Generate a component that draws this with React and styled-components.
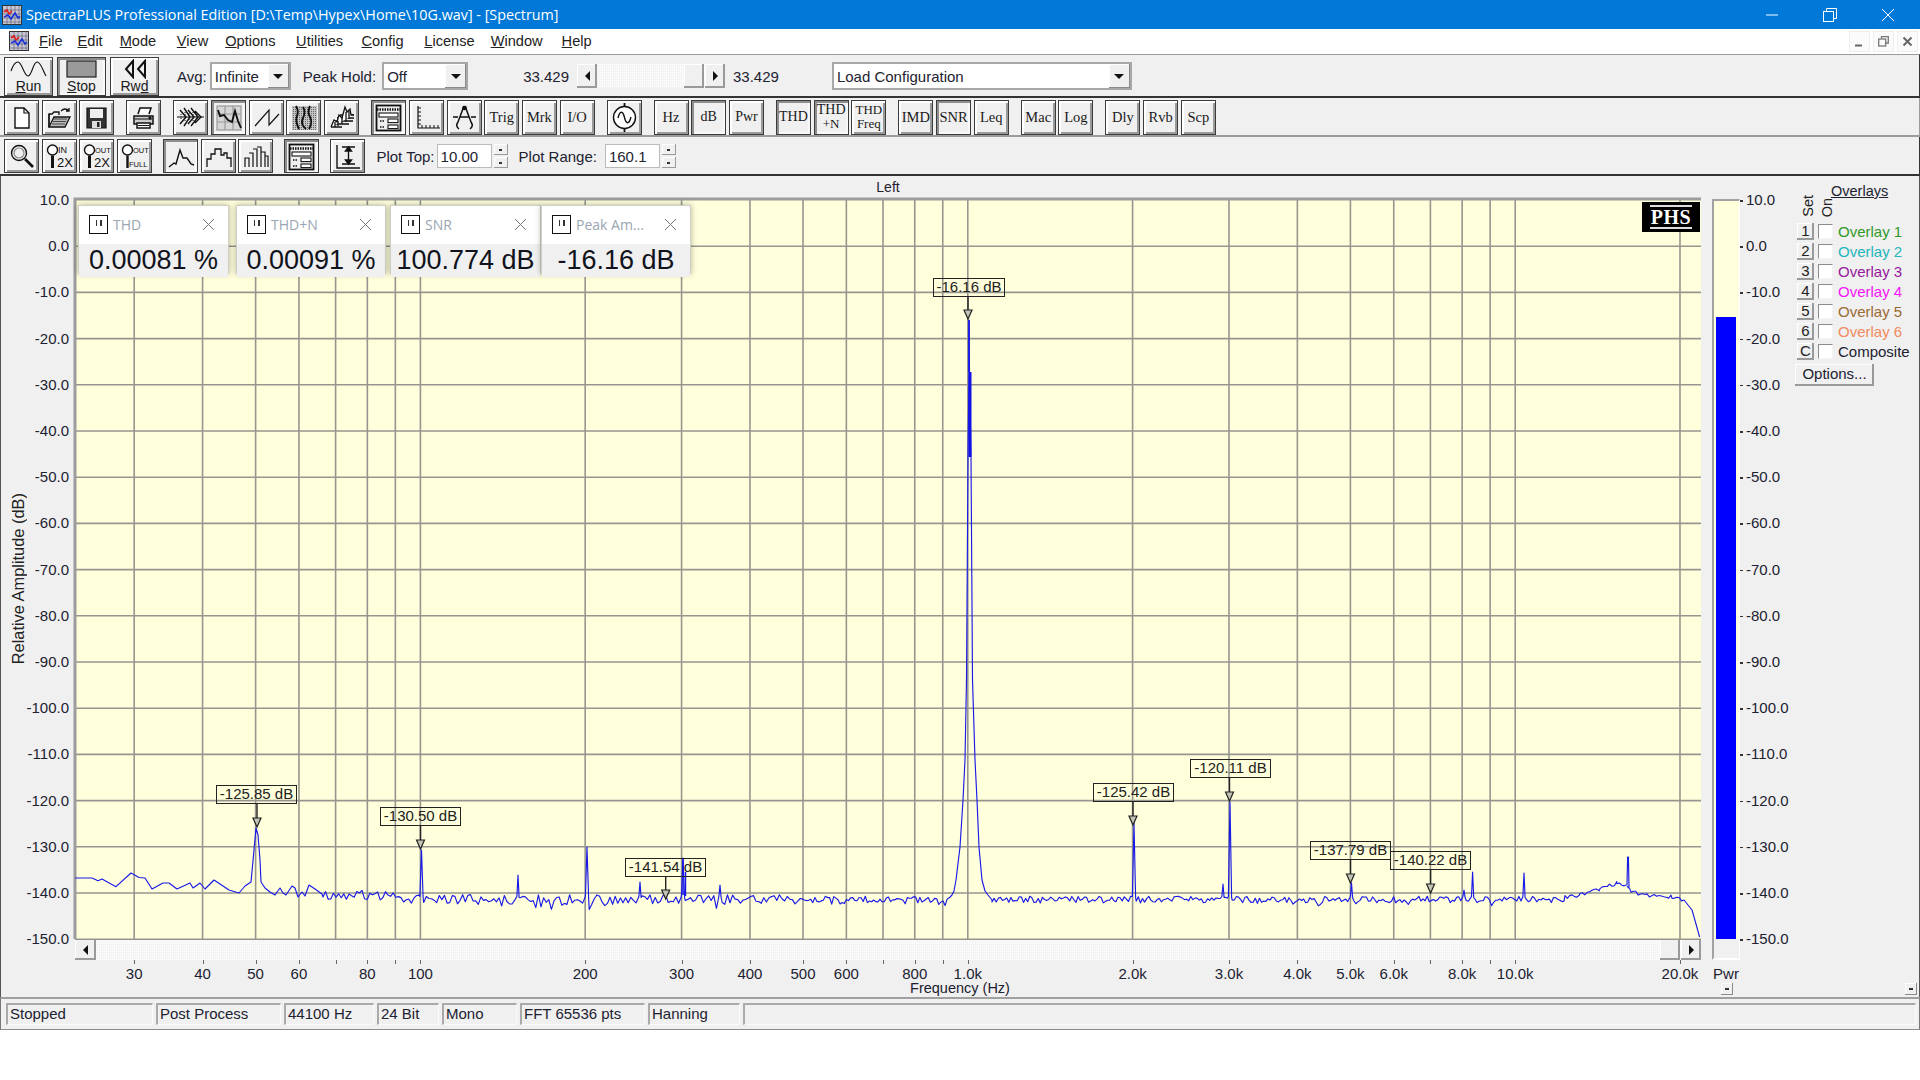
import React from 'react'
import styled, { createGlobalStyle, css } from 'styled-components'

//----------------CSS------------------------>>>//
const Global = createGlobalStyle`
  html, body { margin: 0; padding: 0; background: #fff; overflow: hidden; }
  body { font-family: "Liberation Sans", Arial, sans-serif; color: #1c2230; }
`
const Page = styled.div`
  width: 1920px;
  height: 1030px;
  display: flex;
  flex-direction: column;
  background: #f0f0f0;
  border-bottom: 1px solid #8c8c8c;
  box-sizing: border-box;
`
const TitleBar = styled.div`
  height: 29px;
  flex: none;
  background: #0078d7;
  color: #fff;
  display: flex;
  align-items: center;
  padding: 0 3px 0 2px;
`
const TitleText = styled.div`
  font-family: "Open Sans", sans-serif;
  font-size: 14.33px;
  margin-left: 4px;
  flex: 1;
  white-space: nowrap;
`
const Caption = styled.div`
  width: 58px;
  display: flex;
  justify-content: center;
`
const MenuBar = styled.div`
  height: 25px;
  flex: none;
  background: #fff;
  display: flex;
  align-items: center;
  padding: 0 2px 1px 9px;
  box-sizing: border-box;
`
const MenuItem = styled.span`
  font-size: 14.6px;
  margin-left: ${p => p.$gap}px;
  color: #222;
`
const MdiGroup = styled.div`
  margin-left: auto;
  display: flex;
  gap: 3px;
`
const MdiButton = styled.div`
  width: 21px;
  height: 21px;
  background: #fbfbfb;
  border: 1px solid #eee;
  box-sizing: border-box;
  display: flex;
  align-items: center;
  justify-content: center;
`
const ToolRow = styled.div`
  height: ${p => p.$h}px;
  flex: none;
  box-sizing: border-box;
  display: flex;
  align-items: center;
  padding: 1px 0 0 4px;
  gap: ${p => p.$gap || 12}px;
  border-top: ${p => (p.$top ? '1px solid #9a9a9a' : 'none')};
  border-bottom: 2px solid ${p => (p.$dark ? '#333' : '#9c9c9c')};
  border-right: 1px solid ${p => (p.$dark ? '#333' : '#9c9c9c')};
`
const Group = styled.div`
  display: flex;
  gap: ${p => p.$gap || 2.7}px;
`
const bevel = css`
  background: #f0f0f0;
  box-sizing: border-box;
  border: 1px solid #3c3c3c;
  box-shadow: inset 2px 2px 0 ${p => (p.$pressed ? '#8e8e8e' : '#fff')},
    inset -2px -2px 0 ${p => (p.$pressed ? '#f8f8f8' : '#9a9a9a')};
  color: #1a1a1a;
  display: flex;
  align-items: center;
  justify-content: center;
`
const ToolButton = styled.div`
  ${bevel}
  width: 35px;
  height: ${p => p.$h || 35}px;
  font-family: "Liberation Serif", serif;
  font-size: 14.5px;
  line-height: 14px;
  flex-direction: column;
  text-align: center;
`
const SmallLine = styled.span`
  font-size: ${p => p.$size || 13}px;
`
const BigButton = styled.div`
  ${bevel}
  width: 49px;
  height: 39px;
  flex-direction: column;
  font-size: 14px;
  line-height: 14px;
`
const Label = styled.span`
  font-size: 15px;
  margin-left: ${p => p.$left || 0}px;
  white-space: nowrap;
`
const Combo = styled.div`
  width: ${p => p.$w}px;
  height: 28px;
  margin-left: ${p => p.$left || 0}px;
  box-sizing: border-box;
  border: 2px solid #a8a8a8;
  background: #fff;
  display: flex;
  align-items: center;
  font-size: 15px;
  padding-left: 3px;
  justify-content: space-between;
`
const ComboArrow = styled.div`
  width: 21px;
  height: 100%;
  background: #f0f0f0;
  box-shadow: inset -1px -1px 0 #8a8a8a, inset 1px 1px 0 #fff;
  display: flex;
  align-items: center;
  justify-content: center;
`
const DownArrow = styled.div`
  width: 0;
  height: 0;
  border: 5px solid transparent;
  border-top: 5px solid #111;
  border-bottom: none;
`
const Arrow = styled.div`
  width: 0;
  height: 0;
  border: 5px solid transparent;
  ${p => (p.$dir === 'left'
    ? 'border-right: 5px solid #111; border-left: none;'
    : 'border-left: 5px solid #111; border-right: none;')}
`
const dither = css`
  background-color: #fafafa;
  background-image: linear-gradient(45deg, #efefef 25%, transparent 25%, transparent 75%, #efefef 75%);
  background-size: 2px 2px;
`
const HScroll = styled.div`
  ${dither}
  width: ${p => p.$w}px;
  height: ${p => p.$h}px;
  margin-left: ${p => p.$left || 0}px;
  display: flex;
  justify-content: space-between;
`
const ScrollEnd = styled.div`
  display: flex;
  gap: 1px;
`
const ScrollBtn = styled.div`
  width: ${p => p.$w || 20}px;
  height: 100%;
  background: #f0f0f0;
  box-sizing: border-box;
  box-shadow: inset -2px -2px 0 #9a9a9a, inset 1px 1px 0 #fff;
  display: flex;
  align-items: center;
  justify-content: center;
`
const Field = styled.div`
  width: ${p => p.$w}px;
  height: 24px;
  margin-left: ${p => p.$left}px;
  box-sizing: border-box;
  background: #fff;
  border: 1px solid #bbb;
  font-size: 15px;
  display: flex;
  align-items: center;
  padding-left: 3px;
`
const Spinner = styled.div`
  width: 14px;
  height: 24px;
  margin-left: -9px;
  display: flex;
  flex-direction: column;
  gap: 2px;
`
const SpinButton = styled.div`
  flex: 1;
  background: #f0f0f0;
  box-shadow: inset -1px -1px 0 #9a9a9a, inset 1px 1px 0 #fff;
  display: flex;
  align-items: center;
  justify-content: center;
`
const Dot = styled.div`
  width: 3px;
  height: 2px;
  background: #333;
`
const Workspace = styled.div`
  flex: 1;
  display: grid;
  grid-template-columns: 74px 1626px 11px 28px 54px 1fr;
  grid-template-rows: 23px 740px 21px 1fr;
  border-left: 1px solid #555;
  border-right: 1px solid #555;
  min-height: 0;
`
const PlotHeading = styled.div`
  grid-column: 2;
  grid-row: 1;
  text-align: center;
  font-size: 14px;
  line-height: 22px;
`
const YAxis = styled.div`
  grid-column: 1;
  grid-row: 2;
  position: relative;
  display: flex;
  align-items: center;
  padding-left: 8px;
  padding-top: 19px;
`
const VerticalText = styled.div`
  writing-mode: vertical-rl;
  transform: rotate(180deg);
  font-size: ${p => p.$size || 15}px;
  white-space: nowrap;
  color: #222;
`
const TickLabel = styled.span`
  position: absolute;
  font-size: 15px;
  line-height: 16px;
  white-space: nowrap;
  ${p => (p.$right ? 'right: 6px;' : 'left: 6px;')}
  transform: translateY(-50%);
`
const Plot = styled.div`
  grid-column: 2;
  grid-row: 2;
  position: relative;
  background: #ffffdc;
`
const PlotSvg = styled.svg`
  display: block;
  overflow: visible;
`
const PanelStrip = styled.div`
  position: absolute;
  left: 3px;
  top: 6px;
  display: flex;
`
const Panel = styled.div`
  width: ${p => p.$w}px;
  margin-left: ${p => p.$gap}px;
  height: 69px;
  box-sizing: border-box;
  background: #fff;
  border: 1px solid #cfcfc6;
  box-shadow: 0 0 6px rgba(0, 0, 0, 0.3);
  display: flex;
  flex-direction: column;
`
const PanelHead = styled.div`
  height: 38px;
  flex: none;
  box-sizing: border-box;
  display: flex;
  align-items: center;
  padding: 0 13px 2px 10px;
  color: #9aa5b1;
  font-family: "Open Sans", sans-serif;
  font-size: 14px;
`
const PauseBox = styled.div`
  width: 19px;
  height: 19px;
  box-sizing: border-box;
  border: 1.5px solid #111;
  margin-right: 5px;
  display: flex;
  gap: 3px;
  align-items: center;
  justify-content: center;
`
const PauseBar = styled.div`
  width: 1.5px;
  height: 6px;
  background: #333;
  margin-bottom: 2px;
`
const PanelName = styled.div`
  flex: 1;
`
const PanelValue = styled.div`
  flex: 1;
  background: #f0f0f0;
  font-size: 27px;
  text-align: center;
  line-height: 33px;
  color: #10131c;
  white-space: nowrap;
`
const Logo = styled.div`
  position: absolute;
  right: 1px;
  top: 3px;
  width: 58px;
  height: 30px;
  background: #000;
  color: #fff;
  font-family: "Liberation Serif", serif;
  font-weight: bold;
  font-size: 20px;
  letter-spacing: 0.5px;
  line-height: 20px;
  display: flex;
  align-items: center;
  justify-content: center;
`
const LogoInner = styled.div`
  border-top: 2px double #ddd;
  border-bottom: 2px double #ddd;
  padding: 0 1px;
`
const Marker = styled.div`
  position: absolute;
  width: ${p => p.$w}px;
  height: 19px;
  box-sizing: border-box;
  border: 1.5px solid #222;
  font-size: 15px;
  line-height: 16px;
  text-align: center;
  white-space: nowrap;
  color: #222;
`
const ScrollTrack = styled(HScroll)`
  grid-column: 2;
  grid-row: 3;
`
const XAxis = styled.div`
  grid-column: 2;
  grid-row: 4;
  position: relative;
`
const XLabel = styled.span`
  position: absolute;
  top: 5px;
  font-size: 15px;
  line-height: 17px;
  white-space: nowrap;
  transform: translateX(-50%);
`
const XTick = styled.div`
  position: absolute;
  top: 0;
  width: 1px;
  height: 4px;
  background: #666;
`
const AxisTitle = styled.div`
  position: absolute;
  left: 885px;
  top: 20px;
  transform: translateX(-50%);
  font-size: 14.5px;
  line-height: 16px;
  white-space: nowrap;
`
const MeterColumn = styled.div`
  grid-column: 4;
  grid-row: 2 / 5;
  position: relative;
`
const MeterWell = styled.div`
  height: 761px;
  box-sizing: border-box;
  border-left: 2px solid #a2a2a2;
  border-top: 2px solid #a2a2a2;
  border-right: 1px solid #fff;
  border-bottom: 2px solid #fff;
`
const MeterFill = styled.div`
  height: 738px;
  background: #ffffdc;
  padding: 0 3px 0 2px;
  display: flex;
  align-items: flex-end;
`
const MeterBar = styled.div`
  width: 100%;
  background: #0000ff;
`
const PwrLabel = styled.div`
  font-size: 15px;
  line-height: 17px;
  margin-top: 5px;
  text-align: center;
`
const Grip = styled.div`
  position: absolute;
  width: 12px;
  height: 12px;
  top: ${p => p.$top}px;
  left: ${p => p.$left}px;
  background: #f0f0f0;
  box-shadow: inset -1px -1px 0 #8a8a8a, inset 1px 1px 0 #fff;
  display: flex;
  align-items: center;
  justify-content: center;
`
const GripDash = styled.div`
  width: 4px;
  height: 1.5px;
  background: #333;
`
const MeterAxis = styled.div`
  grid-column: 5;
  grid-row: 2;
  position: relative;
`
const MeterTick = styled.div`
  position: absolute;
  left: 0;
  width: 3px;
  height: 1.5px;
  background: #333;
`
const OverlayPane = styled.div`
  grid-column: 6;
  grid-row: 1 / 5;
  position: relative;
  padding: 7px 0 0 3px;
`
const OverlayTitle = styled.div`
  font-size: 14.5px;
  text-decoration: underline;
  line-height: 16px;
  margin-left: 34px;
`
const OverlayHead = styled.div`
  height: 29px;
  box-sizing: border-box;
  display: flex;
  gap: 3px;
  margin-left: 3px;
  margin-top: -7px;
  padding-bottom: 4px;
  align-items: flex-end;
`
const OverlayRow = styled.div`
  height: 20px;
  display: flex;
  align-items: center;
`
const SetButton = styled.div`
  width: 17px;
  height: 17px;
  background: #f0f0f0;
  box-shadow: inset -2px -2px 0 #9a9a9a, inset 1px 1px 0 #fff;
  font-size: 15px;
  line-height: 16px;
  text-align: center;
  color: #222;
`
const CheckBox = styled.div`
  width: 15px;
  height: 15px;
  margin-left: 4px;
  box-sizing: border-box;
  background: #fff;
  border: 1px solid #8d8d8d;
  border-right-color: #f4f4f4;
  border-bottom-color: #f4f4f4;
`
const OverlayName = styled.span`
  font-size: 15px;
  margin-left: 5px;
  white-space: nowrap;
  color: ${p => p.$color};
`
const OptionsButton = styled.div`
  width: 79px;
  height: 22px;
  margin: 3px 0 0 -2px;
  background: #f0f0f0;
  box-shadow: inset -2px -2px 0 #9a9a9a, inset 1px 1px 0 #fff;
  font-size: 15px;
  line-height: 19px;
  text-align: center;
`
const StatusBar = styled.div`
  height: 32px;
  flex: none;
  box-sizing: border-box;
  display: flex;
  gap: 3px;
  padding: 4px 3px 4px 5px;
  border-top: 2px solid #a0a0a0;
  border-left: 1px solid #777;
  border-right: 1px solid #777;
`
const StatusCell = styled.div`
  width: ${p => p.$w}px;
  flex: ${p => (p.$w ? 'none' : 1)};
  box-sizing: border-box;
  border-top: 2px solid #aaa;
  border-left: 2px solid #aaa;
  border-bottom: 1px solid #fafafa;
  border-right: 1px solid #fafafa;
  font-size: 15px;
  line-height: 17px;
  padding-left: 2px;
  white-space: nowrap;
`

//----------------Data------------------------>>>//
const X0 = 75
const Y0 = 199
const xOf = f => 420.4 + 547.4 * Math.log10(f / 100)
const yOf = db => 200 + (10 - db) * 4.62

const GRID_F = [30, 40, 50, 60, 70, 80, 90, 100, 200, 300, 400, 500, 600, 700, 800, 900, 1000, 2000, 3000, 4000, 5000, 6000, 7000, 8000, 9000, 10000, 20000]
const X_TEXT = { 30: '30', 40: '40', 50: '50', 60: '60', 80: '80', 100: '100', 200: '200', 300: '300', 400: '400', 500: '500', 600: '600', 800: '800', 1000: '1.0k', 2000: '2.0k', 3000: '3.0k', 4000: '4.0k', 5000: '5.0k', 6000: '6.0k', 8000: '8.0k', 10000: '10.0k', 20000: '20.0k' }
const DB_TICKS = Array.from({ length: 17 }, (_, i) => 10 - i * 10)

const MARKERS = [
  { x: 968, text: '-16.16 dB', box: 278, tip: 319, left: 933, w: 72 },
  { x: 257, text: '-125.85 dB', box: 785, tip: 827, left: 216, w: 81 },
  { x: 420.5, text: '-130.50 dB', box: 807, tip: 849, left: 380, w: 81 },
  { x: 665.7, text: '-141.54 dB', box: 858, tip: 899, left: 625, w: 81 },
  { x: 1133, text: '-125.42 dB', box: 783, tip: 825, left: 1093, w: 81 },
  { x: 1229.5, text: '-120.11 dB', box: 759, tip: 801, left: 1190, w: 81 },
  { x: 1350.5, text: '-137.79 dB', box: 841, tip: 883, left: 1310, w: 81 },
  { x: 1430.6, text: '-140.22 dB', box: 851, tip: 893, left: 1390, w: 81 },
]

// narrow spikes over the noise floor [x, top y]
const SPIKES = [
  [421.5, 850], [518, 875], [587, 847], [640, 882], [683, 858], [720, 885],
  [1134, 823], [1223, 884], [1230, 802], [1351.5, 883], [1464, 890],
  [1472.6, 872], [1524, 873], [1579, 888],
]

const LOW_END = [
  [75, 878], [92, 878], [98, 880.7], [102, 879], [116, 886.7], [131, 873], [139, 877.5], [145, 878], [152, 889],
  [163, 883], [169, 883], [177, 889], [190, 883], [193, 888], [200, 883], [205, 889], [214, 880], [229, 890],
  [239, 893], [245, 886], [251, 882], [254, 850], [256, 828], [258, 835], [260, 860], [261, 882], [265, 888],
  [270, 892], [275, 895], [280, 888], [283, 893], [286, 895], [292, 886], [295, 888], [298, 897], [302, 892],
  [305, 896], [309, 885], [315, 889], [322, 894],
]

const MAIN_PEAK = [
  [952, 895], [954, 891], [956, 880], [960, 847], [963, 800], [965, 760], [966.5, 680], [968, 457], [969, 372], [969, 320],
  [969.5, 372], [971, 457], [972.5, 680], [975, 760], [977, 800], [979, 847], [982, 880], [985, 891], [988, 895], [992, 900],
]

const HIGH_END = [
  [1565, 897], [1580, 895], [1600, 889], [1617, 883], [1625, 885], [1631, 892], [1647, 895], [1672, 897],
  [1684, 900], [1692, 910], [1696, 924], [1699.6, 937],
]

// small seeded generator so the noise floor stays the same on every load
const seeded = seed => () => {
  seed = (seed * 16807) % 2147483647
  return seed / 2147483647
}

const floorAt = x => (x < 420 ? 895 : 899.5)

const buildTrace = () => {
  const rand = seeded(90210)
  const pts = [...LOW_END]
  const spikes = [...SPIKES]
  let x = 323
  while (x < 1565) {
    if (x >= 950 && x < 992) {
      pts.push(...MAIN_PEAK)
      x = 992
      continue
    }
    if (spikes.length && x >= spikes[0][0] - 2) {
      const [sx, top] = spikes.shift()
      const wide = top < 860 ? 1.6 : 1.1
      pts.push([sx - wide, floorAt(sx) - 3], [sx, top], [sx + wide, floorAt(sx) - 2])
      x = sx + 2.2
      continue
    }
    const amp = x < 800 ? 10 : 6.5
    let n = (rand() - 0.5) * amp
    if (rand() > 0.9) n += x < 800 ? 5 : 3
    pts.push([x, floorAt(x) + n])
    x += x < 800 ? 2.6 : 2.1
  }
  HIGH_END.forEach(([hx, hy], i) => {
    if (i < HIGH_END.length - 1) {
      const [nx, ny] = HIGH_END[i + 1]
      for (let q = hx; q < nx; q += 2.4) {
        const t = (q - hx) / (nx - hx)
        const jitter = hx < 1684 ? (rand() - 0.5) * 3.6 : 0
        pts.push([q, hy + (ny - hy) * t + jitter])
      }
    }
  })
  pts.push([1699.6, 937])
  // the 1628 spike sits in the hump
  const at = pts.findIndex(p => p[0] > 1627)
  pts.splice(at, 0, [1627, 885], [1627.6, 857], [1628.4, 857], [1629, 888])
  return 'M' + pts.map(p => `${p[0].toFixed(1)} ${p[1].toFixed(1)}`).join('L')
}
const TRACE = buildTrace()

const OVERLAYS = [
  ['1', 'Overlay 1', '#2f9a2a'],
  ['2', 'Overlay 2', '#22b6bc'],
  ['3', 'Overlay 3', '#96189c'],
  ['4', 'Overlay 4', '#f514f5'],
  ['5', 'Overlay 5', '#9a6a32'],
  ['6', 'Overlay 6', '#f28a5e'],
  ['C', 'Composite', '#1c2230'],
]
const STATUS = [
  ['Stopped', 147], ['Post Process', 125], ['44100 Hz', 90], ['24 Bit', 62], ['Mono', 75], ['FFT 65536 pts', 125], ['Hanning', 92], ['', 0],
]
const PANELS = [
  ['THD', '0.00081 %', 151, 0], ['THD+N', '0.00091 %', 150, 7], ['SNR', '100.774 dB', 151, 4], ['Peak Am...', '-16.16 dB', 150, 0],
]

//----------------Icons------------------------>>>//
const Ico = ({ w = 29, h = 29, children, ...rest }) => (
  <svg width={w} height={h} viewBox={`0 0 ${w} ${h}`} fill="none" stroke="#111" strokeWidth="1.2" {...rest}>{children}</svg>
)
const AppIcon = ({ size }) => (
  <svg width={size} height={size} viewBox="0 0 20 20">
    <rect x="0.5" y="0.5" width="19" height="19" fill="#c8c8d4" stroke="#333" />
    <path d="M1 5H19M1 9H19M1 13H19M1 17H19M5 1V19M9 1V19M13 1V19M17 1V19" stroke="#666678" strokeWidth="0.7" />
    <path d="M2 7L5 5L7 9L10 6" stroke="#e01818" strokeWidth="1.6" fill="none" />
    <path d="M2 12L6 10L9 14L13 8L16 13L18 11" stroke="#1830d8" strokeWidth="1.6" fill="none" />
  </svg>
)
const RunIcon = () => (
  <Ico w={42} h={20} strokeWidth="1.1"><path d="M3 12C5 6 7 3 10 3C14 3 16 17 20 17C24 17 25 3 29 3C33 3 35 12 38 17" /></Ico>
)
const StopIcon = () => (
  <Ico w={42} h={20}><rect x="6" y="2" width="29" height="16" fill="#9a9a9a" stroke="#222" /></Ico>
)
const RwdIcon = () => (
  <Ico w={42} h={20} strokeWidth="2"><path d="M19 2L12 10L19 18ZM31 2L24 10L31 18Z" /></Ico>
)
const NewIcon = () => (
  <Ico><path d="M8 5H17L22 10V25H8Z" fill="#fff" strokeWidth="1.4" /><path d="M17 5V10H22" /></Ico>
)
const OpenIcon = () => (
  <Ico strokeWidth="1.3">
    <path d="M4 24V11H7L9 9H14V12" />
    <path d="M4 24H20L25 14H9Z" fill="#bbb" />
    <path d="M4 24V11" /><path d="M16 8Q20 4 24 8M24 5V8H21" />
    <path d="M9 16H22M8 18.5H21M7 21H20" strokeWidth="0.7" />
  </Ico>
)
const SaveIcon = () => (
  <Ico>
    <path d="M5 5H24V25H5Z" fill="#333" />
    <rect x="8" y="6" width="13" height="9" fill="#eee" stroke="none" />
    <rect x="10" y="18" width="9" height="7" fill="#ddd" stroke="none" />
    <rect x="15" y="19" width="2.5" height="5" fill="#222" stroke="none" />
  </Ico>
)
const PrintIcon = () => (
  <Ico strokeWidth="1.5">
    <path d="M9 11L11 5H22L20 11" fill="#fff" />
    <path d="M5 13H24V21H5Z" fill="#ccc" />
    <path d="M8 20H21V25H8Z" fill="#fff" />
    <path d="M6 16H23M9 22.5H20" strokeWidth="1" />
    <circle cx="21" cy="15" r="0.8" fill="#111" />
  </Ico>
)
const TimeIcon = () => (
  <Ico strokeWidth="1">
    <path d="M1 14H28" />
    <path d="M4 7L10 14L4 21M8 5L14 14L8 23M12 7L18 14L12 21M15 5L22 14L15 23M19 8L25 14L19 20" strokeWidth="1.4" />
    <path d="M5 11V17M9 9V19M13 10V18M17 9V19M21 11V17" strokeDasharray="1 1" />
  </Ico>
)
const SpectrumIcon = () => (
  <Ico>
    <rect x="3" y="3" width="24" height="24" fill="#d6d6d6" stroke="#999" />
    <path d="M11 3V27M19 3V27M3 11H27M3 19H27" stroke="#999" />
    <path d="M4 7L6 13L10 12L14 17L18 19L21 8L24 18L27 25" strokeWidth="1.9" />
  </Ico>
)
const SawIcon = () => (
  <Ico><path d="M3 23L17 7V22L27 11" /></Ico>
)
const GramIcon = () => (
  <Ico>
    <defs>
      <pattern id="gramdots" width="2" height="2" patternUnits="userSpaceOnUse">
        <rect width="2" height="2" fill="#c4c4c4" stroke="none" />
        <rect width="1" height="1" fill="#666" stroke="none" />
      </pattern>
    </defs>
    <rect x="3" y="3" width="25" height="24" fill="url(#gramdots)" stroke="none" />
    <path d="M7 3Q10 8 8 13T10 26M14 4Q17 9 14 15T17 26M21 3Q18 9 21 14T20 26" strokeWidth="1.9" />
  </Ico>
)
const WaterfallIcon = () => (
  <Ico strokeWidth="1.3">
    <path d="M4 24H15M6 21H22M8 18H26M10 15H27M13 12H27" />
    <path d="M4 24L7 17L10 19L12 12L15 15L18 4L20 9L23 6L24 12L27 12" fill="#fff" />
    <path d="M8 24V19M11 23V18M15 21V14M19 19V9M22 16V8" />
  </Ico>
)
const FormIcon = () => (
  <Ico strokeWidth="1.1">
    <rect x="2.5" y="2.5" width="24" height="25" fill="#efefef" strokeWidth="1.8" />
    <path d="M3 6.5H26" strokeWidth="2.4" strokeDasharray="1.5 1" />
    <rect x="5" y="10" width="19" height="4" fill="#fff" />
    <rect x="14" y="16" width="10" height="3.6" fill="#fff" />
    <rect x="14" y="22" width="10" height="3.6" fill="#fff" />
    <path d="M6 18H11M6 24H11" strokeWidth="1.6" strokeDasharray="1.5 1" />
  </Ico>
)
const AxisIcon = () => (
  <Ico><path d="M6 3V25H28" strokeWidth="1.2" /><path d="M6 5H9M6 9H9M6 13H9M6 17H9M6 21H9M10 25V22M14 25V22M18 25V22M22 25V22M26 25V22" strokeWidth="1" /></Ico>
)
const CompassIcon = () => (
  <Ico strokeWidth="1.5">
    <path d="M14 3L8 19Q5 23 9 26M15 3L21 19Q24 23 20 26M10 14H19M3 14H8M21 14H26" />
    <circle cx="14.5" cy="5" r="1.6" fill="#111" />
  </Ico>
)
const SignalIcon = () => (
  <Ico w={31} h={31} strokeWidth="1.4">
    <circle cx="15.5" cy="15.5" r="11" fill="#fff" />
    <path d="M9 16C11 8 14 9 15.5 15.5S20 23 22 15" />
    <path d="M15.5 1V4.5M15.5 26.5V30" strokeWidth="1.8" />
  </Ico>
)
const Zoom = ({ top, bottom, fontTop = 9, fontBottom = 13, full }) => (
  <Ico>
    <circle cx="7.5" cy="8" r="5" strokeWidth="1.4" fill="#fff" />
    <path d="M7.5 13.5V26" strokeWidth={full ? 2.4 : 3} />
    <text x="13" y="11" fontFamily="Liberation Sans" fontSize={fontTop} fill="#111" stroke="none">{top}</text>
    <text x={full ? 9 : 12} y="25" fontFamily="Liberation Sans" fontSize={fontBottom} fill="#111" stroke="none">{bottom}</text>
  </Ico>
)
const LoupeIcon = () => (
  <Ico><circle cx="12" cy="11" r="7.5" strokeWidth="1.4" fill="#efefef" /><circle cx="12" cy="11" r="5" stroke="#888" /><path d="M18 17L26 25" strokeWidth="2.6" /></Ico>
)
const PeakIcon = () => (
  <Ico strokeWidth="1.4"><path d="M3 25L8 21L10 22L14 8L17 16L21 16L25 22L28 23" /></Ico>
)
const StepIcon = () => (
  <Ico strokeWidth="1.3"><path d="M3 25V17H7V12H11V7H17V13H20V11H23V16H27V25" /></Ico>
)
const BarsIcon = () => (
  <Ico strokeWidth="1.2"><path d="M4 25V16H8V25M8 11H12V25M12 7H16V25M16 5H20V25M20 10H24V25M24 14H27V25" /></Ico>
)
const RangeIcon = () => (
  <Ico strokeWidth="1.4"><path d="M4 3V26H27" /><path d="M9 5H22M9 22H22M15.5 5V22" /><path d="M12.5 9L15.5 5L18.5 9ZM12.5 18L15.5 22L18.5 18Z" fill="#111" /></Ico>
)
const CapMin = () => <svg width="14" height="14"><path d="M1 7H13" stroke="#fff" /></svg>
const CapRestore = () => (
  <svg width="14" height="14" fill="none" stroke="#fff"><path d="M3.5 3V0.5H13.5V10.5H11" /><rect x="0.5" y="3.5" width="10" height="10" /></svg>
)
const CapClose = () => <svg width="14" height="14" stroke="#fff"><path d="M1 1L13 13M13 1L1 13" /></svg>

const Tool = ({ pressed, h, children }) => <ToolButton $pressed={pressed} $h={h}>{children}</ToolButton>

//----------------Parts------------------------>>>//
const MarkerLabels = () => MARKERS.map(m => (
  <Marker key={m.text} $w={m.w} style={{ left: m.left - X0, top: m.box - Y0 }}>{m.text}</Marker>
))

const PlotDrawing = () => (
  <PlotSvg width="1626" height="740" viewBox={`${X0} ${Y0} 1626 740`}>
    <g stroke="#96968f" strokeWidth="1.6">
      {GRID_F.map(f => <line key={f} x1={xOf(f)} x2={xOf(f)} y1={Y0} y2={939} />)}
      {DB_TICKS.slice(1).map(db => <line key={db} x1={X0} x2={1701} y1={yOf(db)} y2={yOf(db)} />)}
    </g>
    <path d={`M${X0} 939V${Y0}H1701`} fill="none" stroke="#9c9c9c" strokeWidth="3" />
    <path d={TRACE} fill="none" stroke="#1a1ae8" strokeWidth="1.15" strokeLinejoin="round" />
    <path d="M970 372V457" stroke="#1212e8" strokeWidth="3" />
    <path d="M969 320V372" stroke="#1212e8" strokeWidth="1.6" />
    <path d="M683 858V895M685.5 872V896" stroke="#1212e8" strokeWidth="1.4" />
    {MARKERS.map(m => (
      <g key={m.text}>
        <line x1={m.x} x2={m.x} y1={m.box + 18} y2={m.tip - 9} stroke="#222" strokeWidth="1.4" />
        <path d={`M${m.x - 4} ${m.tip - 9}H${m.x + 4}L${m.x} ${m.tip}Z`} fill="#c4c4b6" stroke="#222" strokeWidth="1.2" />
      </g>
    ))}
  </PlotSvg>
)

export default function App() {
  return (
    <Page>
      <Global />
      <TitleBar>
        <AppIcon size={20} />
        <TitleText>SpectraPLUS Professional Edition [D:\Temp\Hypex\Home\10G.wav] - [Spectrum]</TitleText>
        <Caption><CapMin /></Caption>
        <Caption><CapRestore /></Caption>
        <Caption><CapClose /></Caption>
      </TitleBar>

      <MenuBar>
        <AppIcon size={20} />
        <MenuItem $gap={10}><u>F</u>ile</MenuItem>
        <MenuItem $gap={15}><u>E</u>dit</MenuItem>
        <MenuItem $gap={17}><u>M</u>ode</MenuItem>
        <MenuItem $gap={20.6}><u>V</u>iew</MenuItem>
        <MenuItem $gap={17}><u>O</u>ptions</MenuItem>
        <MenuItem $gap={20.6}><u>U</u>tilities</MenuItem>
        <MenuItem $gap={18.3}><u>C</u>onfig</MenuItem>
        <MenuItem $gap={20.7}><u>L</u>icense</MenuItem>
        <MenuItem $gap={16}><u>W</u>indow</MenuItem>
        <MenuItem $gap={19}><u>H</u>elp</MenuItem>
        <MdiGroup>
          <MdiButton><svg width="11" height="11"><path d="M1 9.5H8" stroke="#666" strokeWidth="2" /></svg></MdiButton>
          <MdiButton><svg width="11" height="11" fill="none" stroke="#777" strokeWidth="1.3"><path d="M3.5 2.5V0.7H10.3V7H8" /><rect x="0.7" y="3" width="7" height="7" /></svg></MdiButton>
          <MdiButton><svg width="11" height="11" stroke="#666" strokeWidth="2"><path d="M1.5 1.5L9.5 9.5M9.5 1.5L1.5 9.5" /></svg></MdiButton>
        </MdiGroup>
      </MenuBar>

      <ToolRow $h={44} $top $dark>
        <Group $gap={4}>
          <BigButton><RunIcon /><span><u>R</u>un</span></BigButton>
          <BigButton $pressed><StopIcon /><span><u>S</u>top</span></BigButton>
          <BigButton><RwdIcon /><span>Rw<u>d</u></span></BigButton>
        </Group>
        <Label $left={6}>Avg:</Label>
        <Combo $w={81} $left={-9}>Infinite<ComboArrow><DownArrow /></ComboArrow></Combo>
        <Label>Peak Hold:</Label>
        <Combo $w={86} $left={-6}>Off<ComboArrow><DownArrow /></ComboArrow></Combo>
        <Label $left={43}>33.429</Label>
        <HScroll $w={148} $h={24} $left={-4}>
          <ScrollBtn><Arrow $dir="left" /></ScrollBtn>
          <ScrollEnd><ScrollBtn /><ScrollBtn><Arrow $dir="right" /></ScrollBtn></ScrollEnd>
        </HScroll>
        <Label $left={-4}>33.429</Label>
        <Combo $w={300} $left={41}>Load Configuration<ComboArrow><DownArrow /></ComboArrow></Combo>
      </ToolRow>

      <ToolRow $h={39}>
        <Group>
          <Tool><NewIcon /></Tool>
          <Tool><OpenIcon /></Tool>
          <Tool><SaveIcon /></Tool>
        </Group>
        <Group><Tool><PrintIcon /></Tool></Group>
        <Group>
          <Tool><TimeIcon /></Tool>
          <Tool pressed><SpectrumIcon /></Tool>
          <Tool><SawIcon /></Tool>
          <Tool><GramIcon /></Tool>
          <Tool><WaterfallIcon /></Tool>
        </Group>
        <Group>
          <Tool pressed><FormIcon /></Tool>
          <Tool><AxisIcon /></Tool>
          <Tool><CompassIcon /></Tool>
          <Tool>Trig</Tool>
          <Tool>Mrk</Tool>
          <Tool>I/O</Tool>
        </Group>
        <Group><Tool><SignalIcon /></Tool></Group>
        <Group>
          <Tool>Hz</Tool>
          <Tool pressed><SmallLine $size={14}>dB</SmallLine></Tool>
          <Tool><SmallLine $size={14}>Pwr</SmallLine></Tool>
        </Group>
        <Group>
          <Tool pressed><SmallLine $size={14}>THD</SmallLine></Tool>
          <Tool pressed><SmallLine $size={14}>THD</SmallLine><SmallLine>+N</SmallLine></Tool>
          <Tool><SmallLine>THD</SmallLine><SmallLine>Freq</SmallLine></Tool>
        </Group>
        <Group>
          <Tool>IMD</Tool>
          <Tool pressed>SNR</Tool>
          <Tool>Leq</Tool>
        </Group>
        <Group>
          <Tool>Mac</Tool>
          <Tool>Log</Tool>
        </Group>
        <Group>
          <Tool>Dly</Tool>
          <Tool>Rvb</Tool>
          <Tool>Scp</Tool>
        </Group>
      </ToolRow>

      <ToolRow $h={39} $gap={11} $dark>
        <Group>
          <Tool h={34}><LoupeIcon /></Tool>
          <Tool h={34}><Zoom top="IN" bottom="2X" /></Tool>
          <Tool h={34}><Zoom top="OUT" bottom="2X" fontTop={7.5} /></Tool>
          <Tool h={34}><Zoom top="OUT" bottom="FULL" fontTop={7.5} fontBottom={7.5} full /></Tool>
        </Group>
        <Group>
          <Tool h={34} pressed><PeakIcon /></Tool>
          <Tool h={34}><StepIcon /></Tool>
          <Tool h={34}><BarsIcon /></Tool>
        </Group>
        <Group><Tool h={34} pressed><FormIcon /></Tool></Group>
        <Group><Tool h={34}><RangeIcon /></Tool></Group>
        <Label>Plot Top:</Label>
        <Field $w={55} $left={-9}>10.00</Field>
        <Spinner><SpinButton><Dot /></SpinButton><SpinButton><Dot /></SpinButton></Spinner>
        <Label>Plot Range:</Label>
        <Field $w={55} $left={-3}>160.1</Field>
        <Spinner><SpinButton><Dot /></SpinButton><SpinButton><Dot /></SpinButton></Spinner>
      </ToolRow>

      <Workspace>
        <PlotHeading>Left</PlotHeading>
        <YAxis>
          <VerticalText $size={16.4}>Relative Amplitude (dB)</VerticalText>
          {DB_TICKS.map(db => (
            <TickLabel key={db} $right style={{ top: yOf(db) - Y0 }}>{db.toFixed(1)}</TickLabel>
          ))}
        </YAxis>
        <Plot>
          <PlotDrawing />
          <MarkerLabels />
          <PanelStrip>
            {PANELS.map(([name, value, w, gap]) => (
              <Panel key={name} $w={w} $gap={gap}>
                <PanelHead>
                  <PauseBox><PauseBar /><PauseBar /></PauseBox>
                  <PanelName>{name}</PanelName>
                  <svg width="13" height="13" stroke="#777"><path d="M1 1L12 12M12 1L1 12" /></svg>
                </PanelHead>
                <PanelValue>{value}</PanelValue>
              </Panel>
            ))}
          </PanelStrip>
          <Logo><LogoInner>PHS</LogoInner></Logo>
        </Plot>
        <ScrollTrack $w={1626} $h={21}>
          <ScrollBtn $w={21}><Arrow $dir="left" /></ScrollBtn>
          <ScrollEnd><ScrollBtn /><ScrollBtn><Arrow $dir="right" /></ScrollBtn></ScrollEnd>
        </ScrollTrack>
        <XAxis>
          {GRID_F.map(f => <XTick key={f} style={{ left: xOf(f) - X0 }} />)}
          {Object.keys(X_TEXT).map(f => (
            <XLabel key={f} style={{ left: xOf(+f) - X0 }}>{X_TEXT[f]}</XLabel>
          ))}
          <AxisTitle>Frequency (Hz)</AxisTitle>
        </XAxis>
        <MeterColumn>
          <MeterWell>
            <MeterFill><MeterBar style={{ height: 622 }} /></MeterFill>
          </MeterWell>
          <PwrLabel>Pwr</PwrLabel>
          <Grip $top={784} $left={9}><GripDash /></Grip>
        </MeterColumn>
        <MeterAxis>
          {DB_TICKS.map(db => (
            <React.Fragment key={db}>
              <MeterTick style={{ top: yOf(db) - Y0 }} />
              <TickLabel style={{ top: yOf(db) - Y0 }}>{db.toFixed(1)}</TickLabel>
            </React.Fragment>
          ))}
        </MeterAxis>
        <OverlayPane>
          <OverlayTitle>Overlays</OverlayTitle>
          <OverlayHead>
            <VerticalText $size={14.5}>Set</VerticalText>
            <VerticalText $size={14.5}>On</VerticalText>
          </OverlayHead>
          {OVERLAYS.map(([key, name, color]) => (
            <OverlayRow key={key}>
              <SetButton>{key}</SetButton>
              <CheckBox />
              <OverlayName $color={color}>{name}</OverlayName>
            </OverlayRow>
          ))}
          <OptionsButton>Options...</OptionsButton>
          <Grip $top={807} $left={111}><GripDash /></Grip>
        </OverlayPane>
      </Workspace>

      <StatusBar>
        {STATUS.map(([text, w], i) => <StatusCell key={i} $w={w}>{text}</StatusCell>)}
      </StatusBar>
    </Page>
  )
}
